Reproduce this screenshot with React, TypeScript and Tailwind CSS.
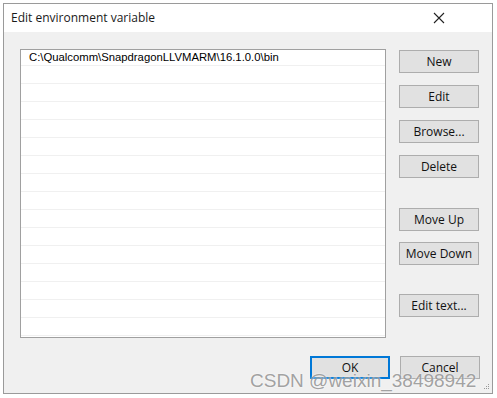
import React from "react";

const BUTTONS_TOP = [
  { label: "New", mt: "mt-0" },
  { label: "Edit", mt: "mt-[12px]" },
  { label: "Browse...", mt: "mt-[12px]" },
  { label: "Delete", mt: "mt-[12px]" },
  { label: "Move Up", mt: "mt-[30px]" },
  { label: "Move Down", mt: "mt-[11px]" },
  { label: "Edit text...", mt: "mt-[29px]" },
];

function WinButton({ label, primary, className = "" }: { label: string; primary?: boolean; className?: string }) {
  return (
    <div
      className={
        "flex h-[23px] w-[80px] items-center justify-center bg-[#e1e1e1] text-[12px] text-[#111] " +
        (primary ? "border-2 border-[#0078d7] " : "border border-[#adadad] ") +
        className
      }
    >
      {label}
    </div>
  );
}

export default function App() {
  const rows = Array.from({ length: 15 });
  return (
    <div className="relative h-[398px] w-[497px] bg-white pl-[3px] pt-[3px] font-['Open_Sans','Noto_Sans',sans-serif]">
      <div className="flex h-[391px] w-[490px] flex-col border border-[#9a9a9a] bg-[#f0f0f0]">
        {/* Title bar */}
        <div className="flex h-[28px] items-center justify-between bg-white pl-[7px]">
          <span className="text-[12px] text-[#1a1a1a]">Edit environment variable</span>
          <svg width="12" height="12" viewBox="0 0 12 12" className="mr-[47px]">
            <path d="M1 1 L11 11 M11 1 L1 11" stroke="#222" strokeWidth="1.1" />
          </svg>
        </div>

        {/* Content */}
        <div className="flex pl-[16px] pt-[17px]">
          <div className="h-[289px] w-[366px] overflow-hidden border border-[#a0a0a0] bg-white">
            <div className="flex h-[16px] items-center whitespace-nowrap border-b border-[#f0f0f0] pl-[8px] font-['Liberation_Sans',Arial,sans-serif] text-[11.3px] text-black">
              C:\Qualcomm\SnapdragonLLVMARM\16.1.0.0\bin
            </div>
            {rows.map((_, i) => (
              <div key={i} className="h-[18px] border-b border-[#f0f0f0]" />
            ))}
          </div>

          <div className="ml-[13px] flex flex-col pt-[1px]">
            {BUTTONS_TOP.map((b) => (
              <WinButton key={b.label} label={b.label} className={b.mt} />
            ))}
          </div>
        </div>

        {/* Footer */}
        <div className="mt-[18px] flex gap-[10px] pl-[306px]">
          <WinButton label="OK" primary className="w-[79px]" />
          <WinButton label="Cancel" />
        </div>
      </div>

      {/* resize grip */}
      <div className="absolute left-[484px] top-[384px] grid grid-cols-3 gap-[1px]">
        <span />
        <span />
        <span className="h-[1px] w-[1px] bg-[#999]" />
        <span />
        <span className="h-[1px] w-[1px] bg-[#999]" />
        <span className="h-[1px] w-[1px] bg-[#999]" />
        <span className="h-[1px] w-[1px] bg-[#999]" />
        <span className="h-[1px] w-[1px] bg-[#999]" />
        <span className="h-[1px] w-[1px] bg-[#999]" />
      </div>

      {/* watermark */}
      <div className="absolute left-[250px] top-[371px] whitespace-nowrap font-['Liberation_Sans',Arial,sans-serif] text-[19px] leading-none text-[#8a8a8a]/80 [text-shadow:0_0_2px_#fff]">
        CSDN @weixin_38498942
      </div>
    </div>
  );
}
